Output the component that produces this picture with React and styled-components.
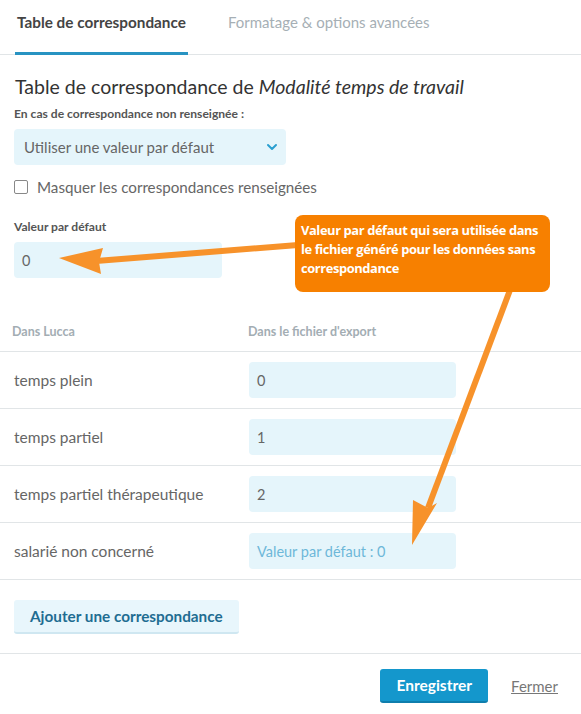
import React from "react";
import styled, { createGlobalStyle } from "styled-components";

const rows = [
  { label: "temps plein", value: "0" },
  { label: "temps partiel", value: "1" },
  { label: "temps partiel thérapeutique", value: "2" },
  { label: "salarié non concerné", value: "", placeholder: "Valeur par défaut : 0" },
];

const App = () => {
  return (
    <Page>
      <GlobalStyle />
      <Tabs>
        <Tab active>Table de correspondance</Tab>
        <Tab>Formatage &amp; options avancées</Tab>
      </Tabs>

      <Body>
        <Title>
          Table de correspondance de <em>Modalité temps de travail</em>
        </Title>
        <FieldLabel>En cas de correspondance non renseignée :</FieldLabel>
        <Select>
          <span>Utiliser une valeur par défaut</span>
          <svg width="12" height="8" viewBox="0 0 12 8">
            <path d="M2 2 L6 6 L10 2" fill="none" stroke="#2a9fd0" strokeWidth="2" strokeLinecap="round" strokeLinejoin="round" />
          </svg>
        </Select>
        <CheckRow>
          <Box />
          Masquer les correspondances renseignées
        </CheckRow>

        <FieldLabel spaced>Valeur par défaut</FieldLabel>
        <Input width="208px">0</Input>
      </Body>

      <Table>
        <HeadRow>
          <HeadCell>Dans Lucca</HeadCell>
          <HeadCell>Dans le fichier d'export</HeadCell>
        </HeadRow>
        {rows.map((row) => (
          <Row key={row.label}>
            <RowLabel>{row.label}</RowLabel>
            <Input width="207px" placeholder={row.placeholder ? 1 : 0}>
              {row.value || row.placeholder}
            </Input>
          </Row>
        ))}
      </Table>

      <AddZone>
        <AddButton>Ajouter une correspondance</AddButton>
      </AddZone>

      <Footer>
        <SaveButton>Enregistrer</SaveButton>
        <CloseLink>Fermer</CloseLink>
      </Footer>

      <Callout>
        Valeur par défaut qui sera utilisée dans
        <br />
        le fichier généré pour les données sans
        <br />
        correspondance
      </Callout>
      <Arrows width="581" height="714" viewBox="0 0 581 714">
        <line x1="298" y1="245" x2="96" y2="261" stroke="#f7922a" strokeWidth="6" />
        <polygon points="59,258 103,248 99,262 101,274" fill="#f7922a" />
        <line x1="510" y1="290" x2="428" y2="508" stroke="#f7922a" strokeWidth="6" />
        <polygon points="412,545 413,500 428,508 437,503" fill="#f7922a" />
      </Arrows>
    </Page>
  );
};

const GlobalStyle = createGlobalStyle`
  body {
    margin: 0;
    background: #fff;
    font-family: "Lato", "Open Sans", sans-serif;
    color: #555;
  }
`;

const Page = styled.div`
  position: relative;
  width: 581px;
  height: 714px;
  overflow: hidden;
`;

const Tabs = styled.div`
  display: flex;
  gap: 38px;
  padding: 0 15px;
  height: 54px;
  border-bottom: 1px solid #e1e5e7;
`;

const Tab = styled.div`
  display: flex;
  align-items: center;
  padding: 0 2px 8px;
  font-size: ${(p) => (p.active ? "15.3px" : "15px")};
  font-weight: ${(p) => (p.active ? 700 : 400)};
  color: ${(p) => (p.active ? "#444" : "#a6afb5")};
  border-bottom: 3px solid ${(p) => (p.active ? "#2893c2" : "transparent")};
  margin-bottom: -1px;
`;

const Body = styled.div`
  padding: 20px 14px 0;
  display: flex;
  flex-direction: column;
  align-items: flex-start;
`;

const Title = styled.h2`
  margin: 0 0 8px 1px;
  font-size: 19.5px;
  font-weight: 400;
  color: #333;
  em {
    font-style: italic;
  }
`;

const FieldLabel = styled.div`
  font-size: 12.1px;
  font-weight: 700;
  color: #555;
  margin-top: ${(p) => (p.spaced ? "23px" : "0")};
  margin-bottom: 8px;
`;

const Select = styled.div`
  width: 272px;
  height: 36px;
  box-sizing: border-box;
  padding: 0 8px 0 10px;
  display: flex;
  align-items: center;
  justify-content: space-between;
  background: #e5f5fb;
  border-radius: 4px;
  font-size: 15px;
  color: #666;
`;

const CheckRow = styled.label`
  display: flex;
  align-items: center;
  gap: 9px;
  margin-top: 13px;
  font-size: 15.2px;
  color: #666;
`;

const Box = styled.span`
  width: 12px;
  height: 12px;
  border: 1.5px solid #888;
  border-radius: 2px;
`;

const Input = styled.div`
  width: ${(p) => p.width};
  height: 36px;
  box-sizing: border-box;
  padding: 0 8px;
  display: flex;
  align-items: center;
  background: #e5f5fb;
  border-radius: 4px;
  font-size: 14.5px;
  color: ${(p) => (p.placeholder ? "#6db8d9" : "#666")};
`;

const Table = styled.div`
  margin-top: 46px;
`;

const HeadRow = styled.div`
  display: grid;
  grid-template-columns: 236px 1fr;
  padding: 0 12px 12px;
  border-bottom: 1px solid #e1e5e7;
`;

const HeadCell = styled.div`
  font-size: 12.5px;
  font-weight: 700;
  color: #a3adb3;
`;

const Row = styled.div`
  display: grid;
  grid-template-columns: 235px 1fr;
  align-items: center;
  height: 57px;
  padding: 0 14px;
  border-bottom: 1px solid #e1e5e7;
  box-sizing: border-box;
`;

const RowLabel = styled.div`
  font-size: 15.5px;
  color: #666;
`;

const AddZone = styled.div`
  padding: 20px 14px 19px;
  border-bottom: 1px solid #e1e5e7;
`;

const AddButton = styled.button`
  height: 34px;
  padding: 0 16px;
  border: none;
  border-bottom: 2px solid #cfe7f1;
  border-radius: 3px;
  background: #e8f6fc;
  color: #1f6d92;
  font-family: inherit;
  font-size: 15.3px;
  font-weight: 700;
`;

const Footer = styled.div`
  display: flex;
  justify-content: flex-end;
  align-items: center;
  gap: 23px;
  padding: 15px 23px 0;
`;

const SaveButton = styled.button`
  height: 34px;
  padding: 0 16px;
  border: none;
  border-bottom: 2px solid #0f7ead;
  border-radius: 3px;
  background: #1497cc;
  color: #fff;
  font-family: inherit;
  font-size: 15.5px;
  font-weight: 700;
`;

const CloseLink = styled.a`
  font-size: 15px;
  color: #777;
  text-decoration: underline;
`;

const Callout = styled.div`
  position: absolute;
  left: 295px;
  top: 215px;
  width: 255px;
  height: 77px;
  box-sizing: border-box;
  padding: 6px 4px 0 6px;
  background: #f78000;
  border-radius: 8px;
  color: #fff;
  font-family: "Open Sans", sans-serif;
  font-size: 12.9px;
  font-weight: 700;
  line-height: 19px;
  letter-spacing: -0.4px;
  white-space: nowrap;
  z-index: 2;
`;

const Arrows = styled.svg`
  position: absolute;
  left: 0;
  top: 0;
  pointer-events: none;
  z-index: 1;
`;

export default App;
